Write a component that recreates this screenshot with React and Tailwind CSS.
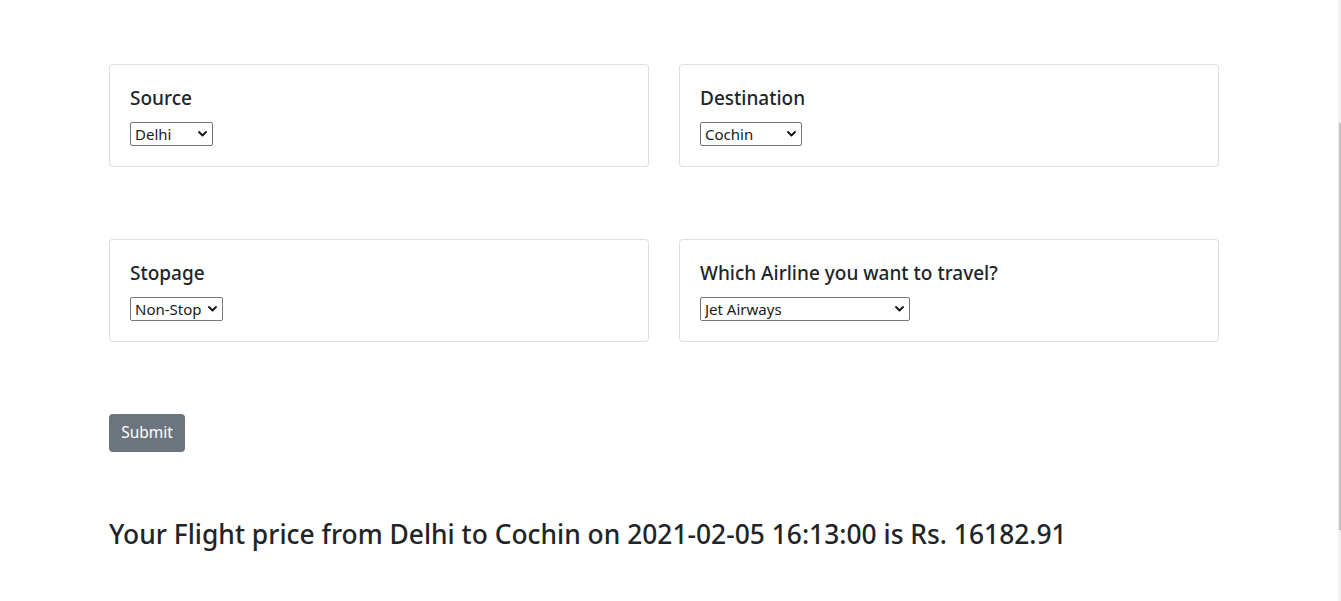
import React from 'react';

const Chevron = () => (
  <svg
    className="pointer-events-none absolute right-[6px] top-1/2 -translate-y-1/2"
    width="9"
    height="6"
    viewBox="0 0 9 6"
    fill="none"
  >
    <path d="M1 1l3.5 3.5L8 1" stroke="#111" strokeWidth="1.8" strokeLinecap="round" strokeLinejoin="round" />
  </svg>
);

const Picker = ({ options, width }) => (
  <div className="relative inline-block" style={{ width }}>
    <select
      defaultValue={options[0]}
      className="block h-[24px] w-full appearance-none rounded-[2px] border border-[#767676] bg-white pl-[4px] pr-[18px] text-[15px] leading-[22px] text-[#1a1a1a] outline-none"
    >
      {options.map(o => (
        <option key={o} value={o}>{o}</option>
      ))}
    </select>
    <Chevron />
  </div>
);

const FieldCard = ({ title, options, width }) => (
  <div className="rounded-[4px] border border-[rgba(0,0,0,0.125)] bg-white px-5 pt-[21px] pb-5">
    <h5 className="mb-[12px] text-[19px] font-medium leading-[24px] text-[#212529]">{title}</h5>
    <Picker options={options} width={width} />
  </div>
);

const cities = ['Delhi', 'Kolkata', 'Mumbai', 'Chennai', 'Banglore'];
const dests = ['Cochin', 'Delhi', 'New Delhi', 'Hyderabad', 'Kolkata'];
const stops = ['Non-Stop', '1 Stop', '2 Stops', '3 Stops', '4 Stops'];
const airlines = ['Jet Airways', 'IndiGo', 'Air India', 'Multiple carriers', 'SpiceJet', 'Vistara', 'GoAir'];

export default function App() {
  return (
    <div
      className="min-h-[601px] bg-white text-[#212529]"
      style={{ fontFamily: '"Noto Sans", "Open Sans", sans-serif' }}
    >
      <div className="ml-[109px] w-[1110px] pt-[64px]">
        <div className="grid grid-cols-2 gap-x-[30px]">
          <FieldCard title="Source" options={cities} width="83px" />
          <FieldCard title="Destination" options={dests} width="102px" />
        </div>

        <div className="mt-[72px] grid grid-cols-2 gap-x-[30px]">
          <FieldCard title="Stopage" options={stops} width="93px" />
          <FieldCard title="Which Airline you want to travel?" options={airlines} width="210px" />
        </div>

        <button
          type="button"
          className="mt-[72px] h-[38px] w-[76px] rounded-[4px] bg-[#6c757d] text-[15.5px] text-white"
        >
          Submit
        </button>

        <h3 className="mt-[65px] text-[26.4px] font-medium leading-[34px] text-[#212529]">
          Your Flight price from Delhi to Cochin on 2021-02-05 16:13:00 is Rs. 16182.91
        </h3>
      </div>

      <div className="fixed right-0 top-0 h-[601px] w-[3px] bg-[#f1f1f1]">
        <div className="absolute right-0 top-[123px] h-[407px] w-[2px] bg-[#c1c1c1]" />
      </div>
    </div>
  );
}
